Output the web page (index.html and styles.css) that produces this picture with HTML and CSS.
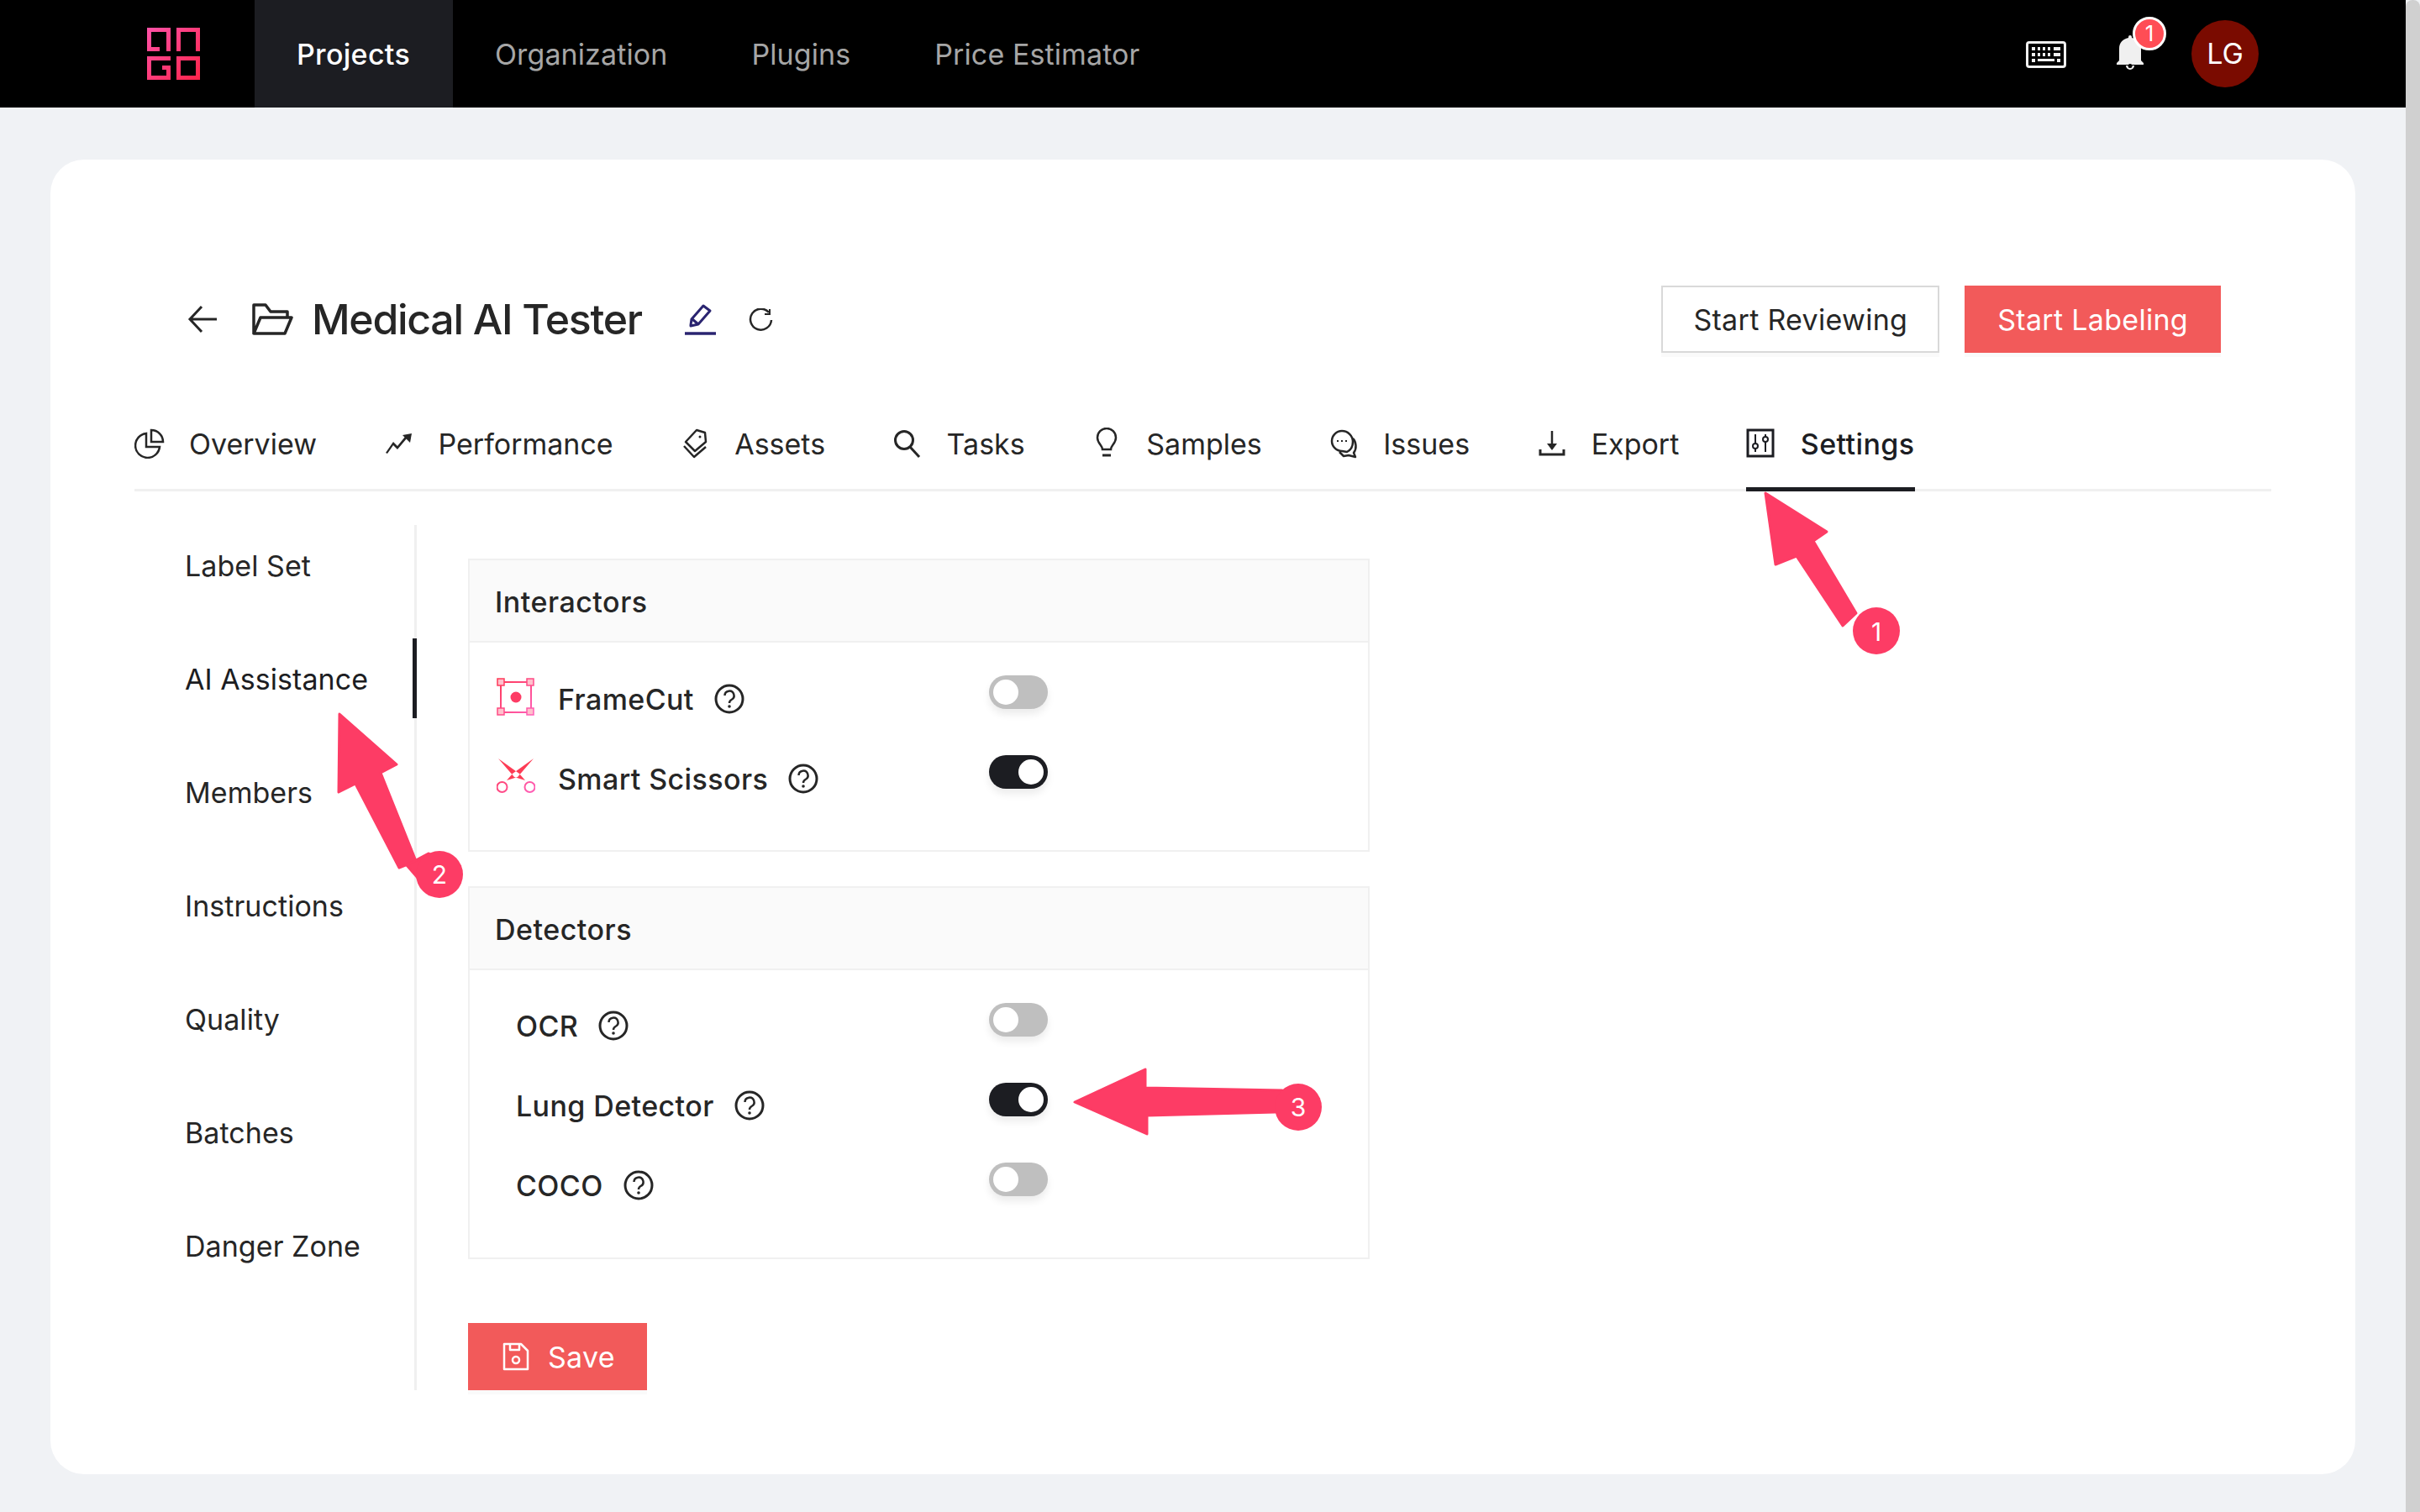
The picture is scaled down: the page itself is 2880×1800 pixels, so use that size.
FILE: index.html
```html
<!DOCTYPE html>
<html lang="en">
<head>
    <meta charset="UTF-8">
    <title>Medical AI Tester - Settings</title>
    <link rel="stylesheet" href="styles.css">
</head>
<body>

<div class="page">
    <nav class="topbar">
        <div class="logo">
            <svg width="63" height="62" viewBox="0 0 63 62" fill="none">
                <defs>
                    <linearGradient id="logoGrad" gradientUnits="userSpaceOnUse" x1="0" y1="0" x2="63" y2="62">
                        <stop offset="0" stop-color="#ff52a8"/>
                        <stop offset="1" stop-color="#ff2449"/>
                    </linearGradient>
                </defs>
                <path d="M15 25.500H2.500V2.500H25.500V28M37.500 28V2.500H60.500V28M28 36.500H2.500V59.500H25.500V47.500H18M37.500 36.500H60.500V59.500H37.500Z" stroke="url(#logoGrad)" stroke-width="5"/>
            </svg>
        </div>
        <a class="nav-link active">Projects</a>
        <a class="nav-link">Organization</a>
        <a class="nav-link">Plugins</a>
        <a class="nav-link">Price Estimator</a>
        <div class="nav-right">
            <svg class="kbd-icon" width="48" height="32" viewBox="0 0 48 32">
                <rect x="1.500" y="1.500" width="45" height="29" rx="2.500" fill="none" stroke="#f0f0f0" stroke-width="3"/>
                <path d="M7 7h4v4H7zM14 7h3v4h-3zM20 7h3v4h-3zM26 7h3v4h-3zM33 7h8v4h-8zM7 14h4v4H7zM14 14h3v4h-3zM20 14h3v4h-3zM26 14h3v4h-3zM33 14h8v4h-8zM7 21h4v4H7zM14 21h20v3H14zM37 21h4v4h-4z" fill="#f0f0f0"/>
            </svg>
            <div class="bell">
                <svg width="34" height="44" viewBox="0 0 34 44">
                    <path d="M15 4a2 2 0 0 1 4 0v1c7 1.500 11 6 11 13v14l3 3v2H1v-2l3-3V18C4 11 8 6.500 15 5zM12 38h10a5 5 0 0 1-10 0z" fill="#f0f0f0"/>
                    <circle cx="17" cy="38.500" r="2.500" fill="#000"/>
                </svg>
                <span class="badge">1</span>
            </div>
            <div class="avatar">LG</div>
        </div>
    </nav>

    <main class="card">
        <header class="title-row">
            <svg class="back-icon" width="36" height="34" viewBox="0 0 36 34" fill="none" stroke="#262626" stroke-width="3">
                <path d="M35 17H3M17 2L3 17l14 15"/>
            </svg>
            <svg class="folder-icon" width="50" height="38" viewBox="0 0 50 38" fill="none" stroke="#262626" stroke-width="3.500" stroke-linejoin="round">
                <path d="M2 36V2h14l6 8h20v7M2 36h37l8-19H10L2 36z"/>
            </svg>
            <h1>Medical AI Tester</h1>
            <svg class="edit-icon" width="37" height="38" viewBox="0 0 37 38" fill="none" stroke="#2a2470">
                <path d="M7 26l1-7L22 3l8 6-14 16-9 2zM9 19l7 6" stroke-width="3" stroke-linejoin="round"/>
                <path d="M0 36h37" stroke-width="3.500"/>
            </svg>
            <svg class="refresh-icon" width="30" height="28" viewBox="0 0 30 28" fill="none" stroke="#262626" stroke-width="2.500">
                <path d="M25 5A12.500 12.500 0 1 0 28 14"/>
                <path d="M26 1v6h-6" stroke-width="2"/>
            </svg>
            <div class="title-actions">
                <button class="btn btn-outline">Start Reviewing</button>
                <button class="btn btn-red">Start Labeling</button>
            </div>
        </header>

        <div class="tabs">
            <a class="tab">
                <svg width="36" height="36" viewBox="0 0 36 36" fill="none" stroke="#262626" stroke-width="2.500">
                    <path d="M14 6A14.500 14.500 0 1 0 30 22H14z"/>
                    <path d="M20 2a14 14 0 0 1 14 14H20z"/>
                </svg>
                Overview
            </a>
            <a class="tab">
                <svg width="36" height="36" viewBox="0 0 36 36" fill="#262626">
                    <path d="M3 29l9-13 5 5 9-11 2 2-11 13-5-5-7 10z"/>
                    <path d="M23 8l11-2-2 11z"/>
                </svg>
                Performance
            </a>
            <a class="tab">
                <svg width="36" height="36" viewBox="0 0 36 36" fill="none" stroke="#262626" stroke-width="2.500" stroke-linejoin="round">
                    <path d="M20 2l10 3 1 11-13 11-11-11z"/>
                    <path d="M5 21l12 13 14-12"/>
                    <circle cx="24" cy="10" r="1.500" fill="#262626" stroke="none"/>
                </svg>
                Assets
            </a>
            <a class="tab">
                <svg width="36" height="36" viewBox="0 0 36 36" fill="none" stroke="#262626" stroke-width="3">
                    <circle cx="14" cy="14" r="10.500"/>
                    <path d="M21 22l11 12"/>
                </svg>
                Tasks
            </a>
            <a class="tab">
                <svg width="36" height="38" viewBox="0 0 36 38" fill="none" stroke="#262626" stroke-width="2.500">
                    <path d="M13 26c0-5-6-7-6-14a11 11 0 0 1 22 0c0 7-6 9-6 14z"/>
                    <path d="M13 33h10" stroke-width="3"/>
                </svg>
                Samples
            </a>
            <a class="tab">
                <svg width="36" height="36" viewBox="0 0 36 36" fill="none" stroke="#262626" stroke-width="2.500" stroke-linejoin="round">
                    <path d="M16 3a13 13 0 0 1 13 13c0 6-3 10-7 12l-6-1a12 12 0 0 1-12-12A12 12 0 0 1 16 3z"/>
                    <path d="M29 12c4 4 5 12 1 17l2 5-8-2-6 1-5-5"/>
                    <path d="M10 15h2M15 15h2M20 15h2" stroke-width="2"/>
                </svg>
                Issues
            </a>
            <a class="tab">
                <svg width="36" height="36" viewBox="0 0 36 36" fill="none" stroke="#262626" stroke-width="2.500">
                    <path d="M18 3v21"/>
                    <path d="M12 18h12l-6 8z" fill="#262626" stroke="none"/>
                    <path d="M4 25v6h28v-6" stroke-width="3"/>
                </svg>
                Export
            </a>
            <a class="tab active">
                <svg width="36" height="36" viewBox="0 0 36 36" fill="none" stroke="#1c1d22" stroke-width="3">
                    <rect x="2" y="2" width="30" height="31"/>
                    <path d="M11 7v21M23 7v21" stroke-width="2"/>
                    <circle cx="11" cy="21" r="3" fill="#fff" stroke-width="2"/>
                    <circle cx="23" cy="13" r="3" fill="#fff" stroke-width="2"/>
                </svg>
                Settings
            </a>
        </div>

        <div class="settings">
            <aside class="side-menu">
                <a class="side-item">Label Set</a>
                <a class="side-item active">AI Assistance</a>
                <a class="side-item">Members</a>
                <a class="side-item">Instructions</a>
                <a class="side-item">Quality</a>
                <a class="side-item">Batches</a>
                <a class="side-item">Danger Zone</a>
            </aside>

            <section class="panel">
                <div class="group">
                    <div class="group-head">Interactors</div>
                    <div class="group-body">
                        <div class="row">
                            <div class="row-label">
                                <svg class="tool-icon" width="46" height="46" viewBox="0 0 46 46" fill="none">
                                    <defs>
                                        <linearGradient id="toolGrad" gradientUnits="userSpaceOnUse" x1="0" y1="0" x2="46" y2="46">
                                            <stop offset="0" stop-color="#ff3650"/>
                                            <stop offset="1" stop-color="#ff62c0"/>
                                        </linearGradient>
                                    </defs>
                                    <rect x="5" y="5" width="36" height="36" stroke="url(#toolGrad)" stroke-width="2"/>
                                    <g fill="#ffc0cc" stroke="url(#toolGrad)" stroke-width="1.500">
                                        <rect x="1" y="1" width="8" height="8"/>
                                        <rect x="36" y="1" width="8" height="8"/>
                                        <rect x="1" y="36" width="8" height="8"/>
                                        <rect x="36" y="36" width="8" height="8"/>
                                    </g>
                                    <circle cx="23" cy="23" r="6.500" fill="#fd3c65"/>
                                </svg>
                                <span>FrameCut</span>
                                <svg class="help-icon"><use href="#help"/></svg>
                            </div>
                            <span class="toggle"></span>
                        </div>
                        <div class="row">
                            <div class="row-label">
                                <svg class="tool-icon" width="46" height="46" viewBox="0 0 46 46" fill="none">
                                    <path d="M2 1L27 19L34 27L21 23ZM44 1L19 19L12 27L25 23Z" fill="#fd3c55"/>
                                    <circle cx="6.500" cy="35" r="6" stroke="url(#toolGrad)" stroke-width="2"/>
                                    <circle cx="39.500" cy="35" r="6" stroke="url(#toolGrad)" stroke-width="2"/>
                                </svg>
                                <span>Smart Scissors</span>
                                <svg class="help-icon"><use href="#help"/></svg>
                            </div>
                            <span class="toggle on"></span>
                        </div>
                    </div>
                </div>

                <div class="group">
                    <div class="group-head">Detectors</div>
                    <div class="group-body">
                        <div class="row">
                            <div class="row-label indent">
                                <span>OCR</span>
                                <svg class="help-icon"><use href="#help"/></svg>
                            </div>
                            <span class="toggle"></span>
                        </div>
                        <div class="row">
                            <div class="row-label indent">
                                <span>Lung Detector</span>
                                <svg class="help-icon"><use href="#help"/></svg>
                            </div>
                            <span class="toggle on"></span>
                        </div>
                        <div class="row">
                            <div class="row-label indent">
                                <span>COCO</span>
                                <svg class="help-icon"><use href="#help"/></svg>
                            </div>
                            <span class="toggle"></span>
                        </div>
                    </div>
                </div>

                <button class="btn btn-red btn-save">
                    <svg width="32" height="34" viewBox="0 0 32 34" fill="none" stroke="#fff" stroke-width="2.500" stroke-linejoin="round">
                        <path d="M2 2h20l8 8v22H2z"/>
                        <path d="M9 2v7h11V2"/>
                        <circle cx="16" cy="21" r="4"/>
                    </svg>
                    Save
                </button>
            </section>
        </div>
    </main>

    <!-- annotation arrows drawn on top of the screenshot -->
    <svg class="marks" width="2863" height="1800" viewBox="0 0 2863 1800">
        <g fill="#fd3c65" stroke="#fd3c65" stroke-width="3" stroke-linejoin="round">
            <path d="M2101 587L2174 633L2158 644L2209 730L2193 745L2138 662L2113 672Z"/>
            <path d="M404 850L472 910L453 920L495 1025L475 1033L423 933L403 943Z"/>
            <path d="M1279 1312L1363 1273V1295L1526 1298L1518 1324L1365 1328V1350Z"/>
            <path d="M484 1030L510 1016L530 1030L510 1060Z"/>
        </g>
        <g fill="#fd3c65">
            <circle cx="2233" cy="751" r="28"/>
            <circle cx="523" cy="1041" r="28"/>
            <circle cx="1545" cy="1318" r="28"/>
        </g>
        <g class="mark-num" fill="#fff" text-anchor="middle">
            <text x="2233" y="763">1</text>
            <text x="523" y="1052">2</text>
            <text x="1545" y="1329">3</text>
        </g>
    </svg>
</div>

<div class="scrollbar"></div>

<svg width="0" height="0" class="sprite">
    <symbol id="help" viewBox="0 0 36 36">
        <circle cx="18" cy="18" r="16" fill="none" stroke="#262626" stroke-width="3"/>
        <path d="M12.500 14a5.500 5.500 0 1 1 8 5c-1.800 1-2.500 2-2.500 4" fill="none" stroke="#262626" stroke-width="2.500"/>
        <circle cx="18" cy="27" r="1.800" fill="#262626"/>
    </symbol>
</svg>

</body>
</html>
```

FILE: styles.css
```css
* {
    box-sizing: border-box;
}
html, body {
    margin: 0;
    height: 100%;
    overflow: hidden;
}
body {
    display: flex;
    background: #f0f2f5;
    font-family: Inter, "Liberation Sans", sans-serif;
    color: #262626;
}
.page {
    position: relative;
    flex: 1;
    min-width: 0;
}
.scrollbar {
    width: 17px;
    background: #d0d0d0;
    border-radius: 8px 8px 0 0;
}
.sprite {
    position: absolute;
}

/* top nav */
.topbar {
    display: flex;
    height: 128px;
    background: #000;
}
.logo {
    width: 303px;
    padding: 33px 0 0 175px;
}
.nav-link {
    display: flex;
    align-items: center;
    padding: 0 50px;
    font-size: 34px;
    letter-spacing: 0.1px;
    color: #a6a6a6;
}
.nav-link.active {
    width: 236px;
    background: #1c1d22;
    color: #fff;
    font-weight: 500;
    letter-spacing: 0.3px;
}
.nav-right {
    display: flex;
    align-items: center;
    margin-left: auto;
    padding-right: 175px;
}
.kbd-icon {
    margin-top: 1px;
    margin-right: 59px;
}
.bell {
    position: relative;
    height: 44px;
    margin-top: -5px;
    margin-right: 56px;
}
.badge {
    position: absolute;
    top: -20px;
    left: 20px;
    width: 40px;
    height: 40px;
    border: 3px solid #fff;
    border-radius: 50%;
    background: #ff4d55;
    color: #fff;
    font-size: 26px;
    line-height: 34px;
    text-align: center;
}
.avatar {
    width: 80px;
    height: 80px;
    border-radius: 50%;
    background: #7a0b00;
    color: #fff;
    font-size: 34px;
    line-height: 80px;
    text-align: center;
}

/* main card */
.card {
    width: 2743px;
    height: 1565px;
    margin: 62px 0 0 60px;
    padding: 150px 100px 0;
    border-radius: 40px;
    background: #fff;
}
.title-row {
    display: flex;
    align-items: center;
    height: 80px;
    padding: 0 60px 0 63px;
}
.folder-icon {
    margin-left: 41px;
}
.title-row h1 {
    margin: 0 0 0 21px;
    font-size: 50px;
    font-weight: 500;
    letter-spacing: -1.3px;
    color: #262626;
}
.edit-icon {
    margin-left: 51px;
}
.refresh-icon {
    margin: 2px 0 0 38px;
}
.title-actions {
    display: flex;
    gap: 30px;
    margin-left: auto;
}
.btn {
    height: 80px;
    padding: 0 39px;
    border: 0;
    font-family: inherit;
    font-size: 34px;
    letter-spacing: 0.3px;
    box-shadow: 0 5px 0 rgba(0,0,0,0.02);
}
.btn-outline {
    padding: 0 36px;
    border: 2px solid #d9d9d9;
    background: #fff;
    color: #262626;
}
.btn-red {
    background: #f25a5a;
    color: #fff;
}

/* tabs */
.tabs {
    display: flex;
    gap: 79.5px;
    height: 165px;
    padding-top: 51px;
    border-bottom: 3px solid #f0f0f0;
}
.tab {
    display: flex;
    align-items: center;
    gap: 29px;
    height: 114px;
    font-size: 34px;
}
.tab.active {
    padding-top: 5px;
    border-bottom: 5px solid #1c1d22;
    color: #1c1d22;
    font-weight: 500;
    letter-spacing: 0.4px;
}

/* settings */
.settings {
    display: flex;
    margin-top: 40px;
}
.side-menu {
    display: flex;
    flex-direction: column;
    gap: 40px;
    width: 336px;
    height: 1030px;
    border-right: 3px solid #f0f0f0;
}
.side-item {
    display: flex;
    align-items: center;
    height: 95px;
    margin-right: -3px;
    padding: 2px 0 0 60px;
    font-size: 34px;
    letter-spacing: 0.05px;
}
.side-item.active {
    border-right: 5px solid #1c1d22;
    color: #1c1d22;
}
.panel {
    width: 1073px;
    margin-left: 61px;
    padding-top: 40px;
}
.group {
    margin-bottom: 41px;
    border: 2px solid #f0f0f0;
}
.group-head {
    height: 98px;
    padding-left: 30px;
    border-bottom: 2px solid #f0f0f0;
    background: #fafafa;
    font-size: 34px;
    font-weight: 500;
    letter-spacing: 0.5px;
    line-height: 100px;
}
.group-body {
    padding: 39px 0 18px 30px;
}
.row {
    display: grid;
    grid-template-columns: 588px 70px;
    height: 95px;
}
.row-label {
    display: flex;
    align-items: center;
    height: 56px;
    font-size: 34px;
    font-weight: 500;
    letter-spacing: 0.4px;
}
.row-label.indent {
    height: 54px;
    padding-left: 25px;
}
.tool-icon {
    margin: -4px 27px 0 2px;
}
.help-icon {
    width: 36px;
    height: 36px;
    margin-left: 24px;
}
.toggle {
    position: relative;
    width: 70px;
    height: 40px;
    border-radius: 20px;
    background: #bfbfbf;
    box-shadow: 0 6px 10px rgba(0,0,0,0.08);
}
.toggle::after {
    content: "";
    position: absolute;
    top: 5px;
    left: 5px;
    width: 30px;
    height: 30px;
    border-radius: 50%;
    background: #fff;
}
.toggle.on {
    background: #1c1d22;
}
.toggle.on::after {
    left: 35px;
}
.btn-save {
    display: flex;
    align-items: center;
    gap: 22px;
    width: 213px;
    margin-top: 76px;
    padding: 0 0 0 41px;
}

/* annotations */
.marks {
    position: absolute;
    top: 0;
    left: 0;
    pointer-events: none;
}
.mark-num {
    font-size: 30px;
}
```
